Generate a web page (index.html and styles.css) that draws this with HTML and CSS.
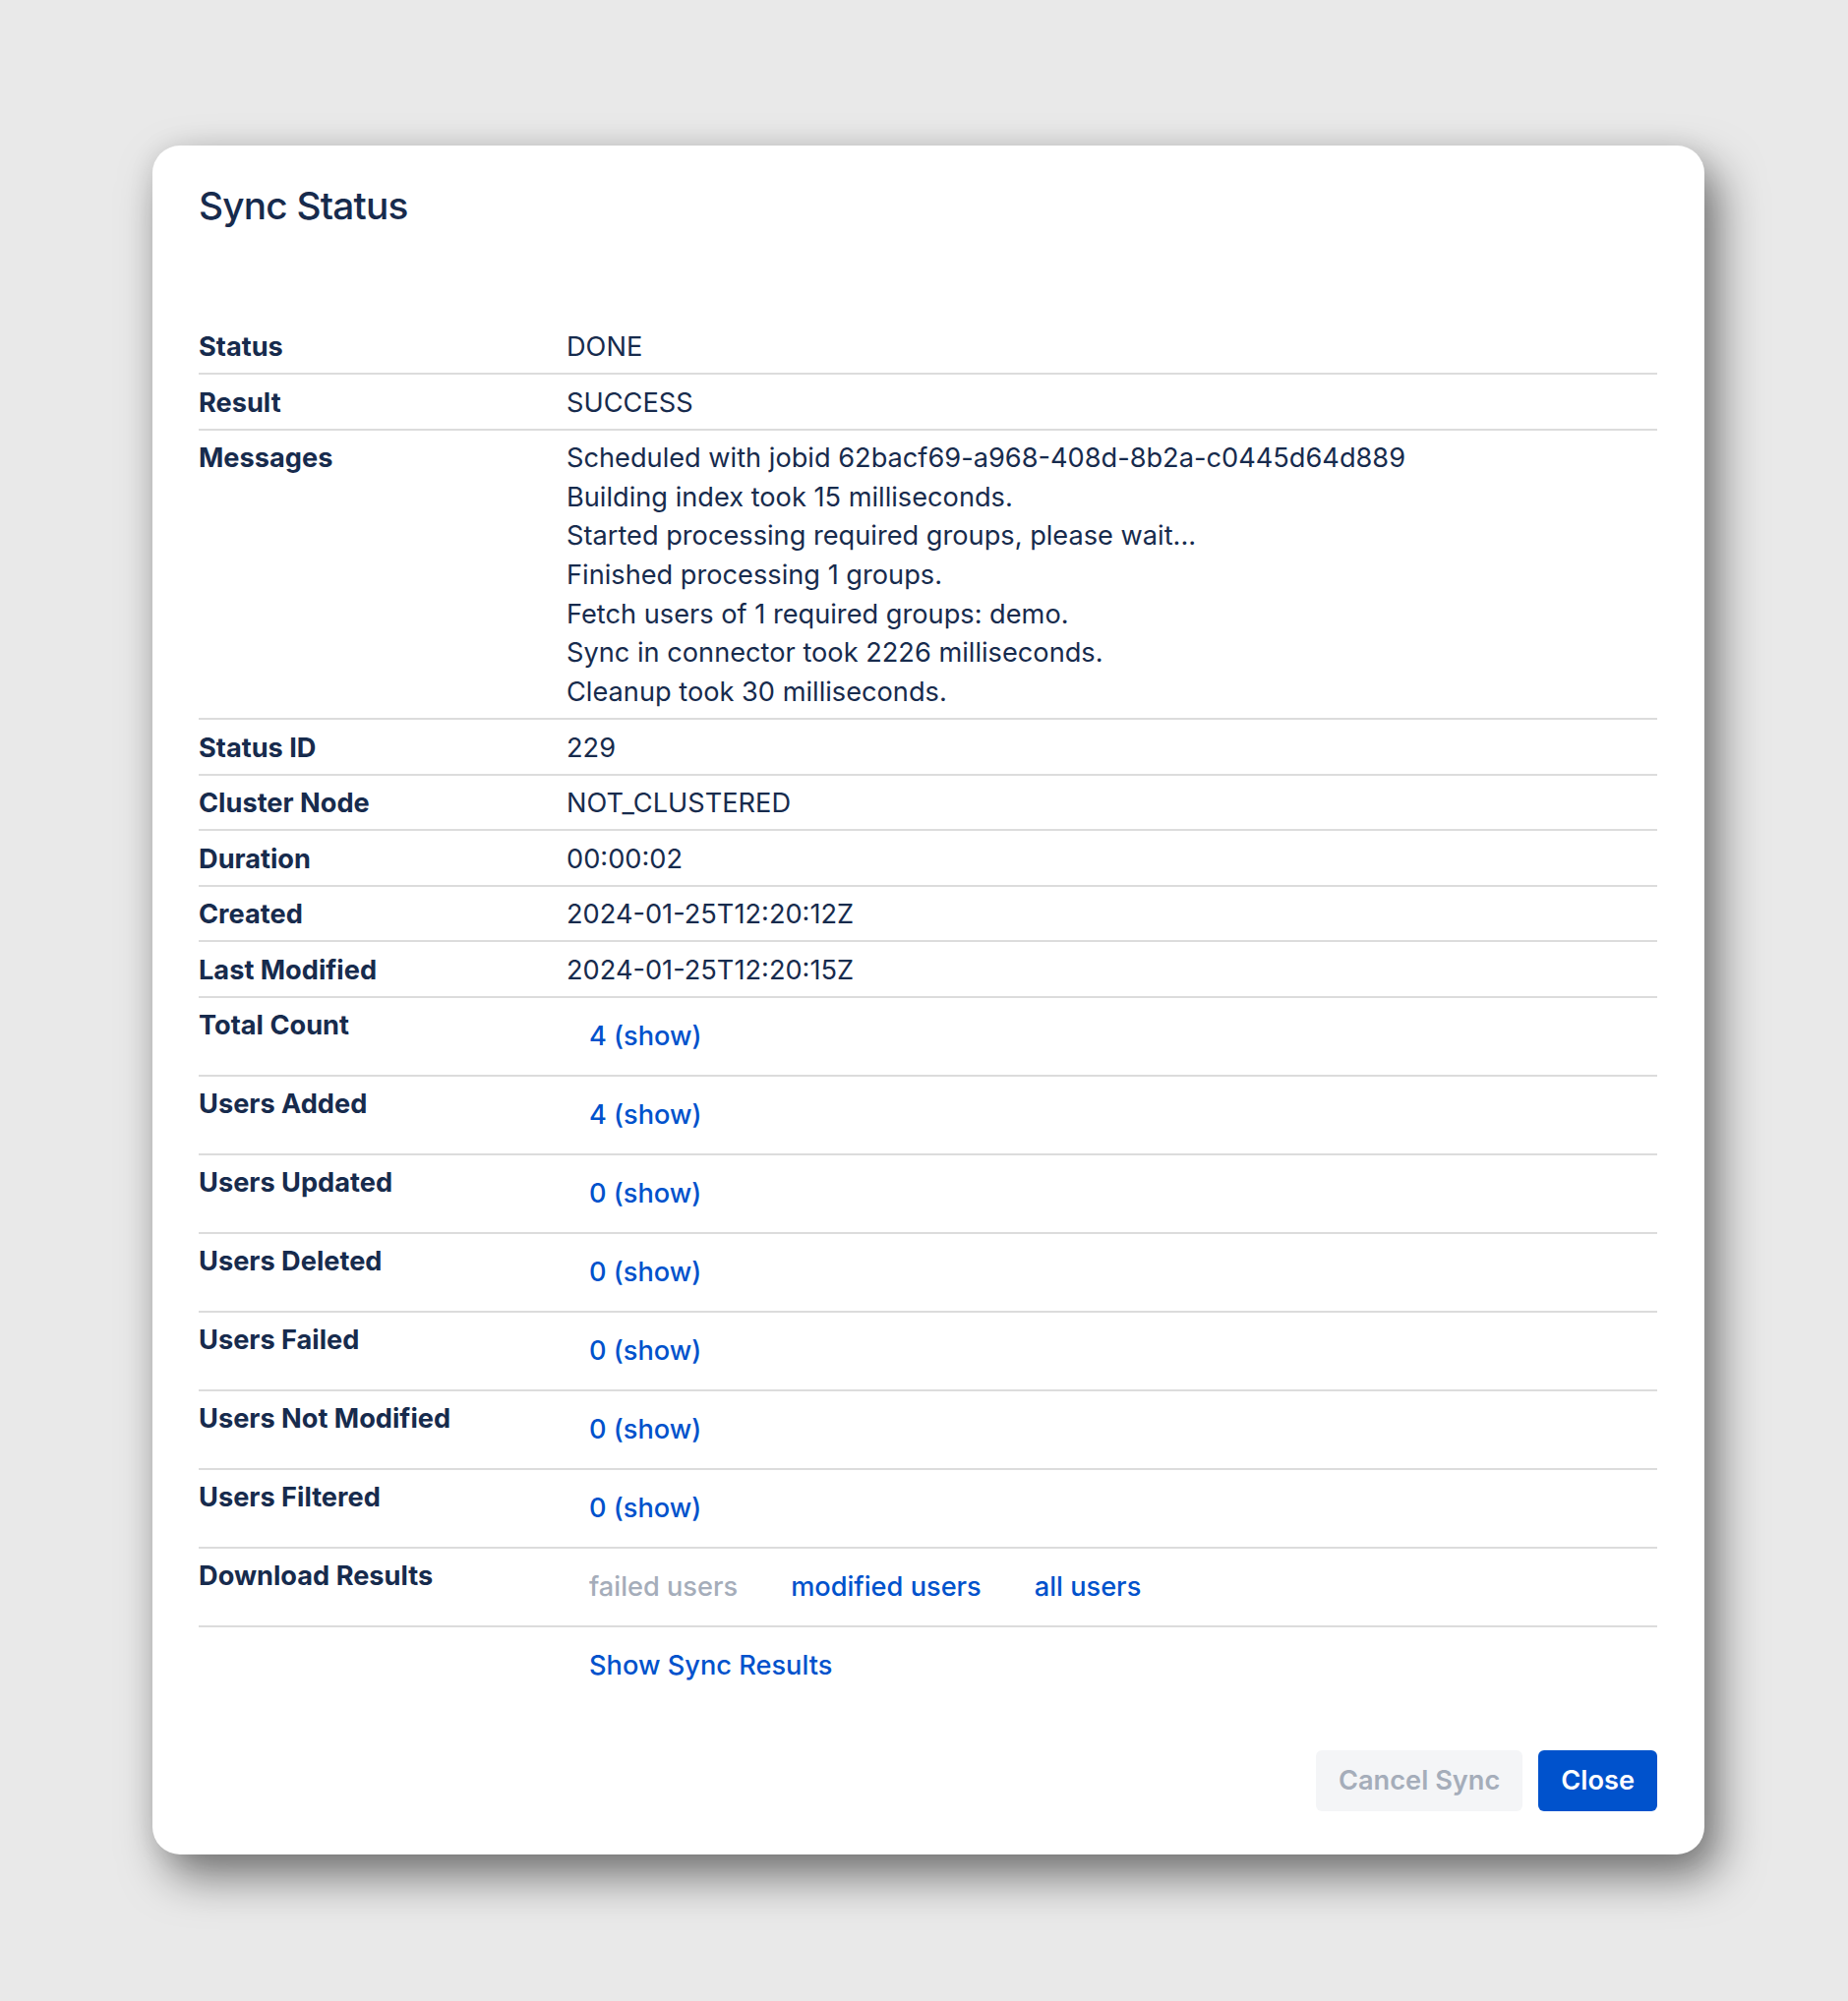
FILE: index.html
```html
<!DOCTYPE html>
<html lang="en">
<head>
<meta charset="utf-8">
<title>Sync Status</title>
<link rel="stylesheet" href="styles.css">
</head>
<body>
<div class="page">
  <section class="dialog">
    <h1 class="dialog-title">Sync Status</h1>
    <table class="status-table">
      <tbody>
        <tr><th>Status</th><td>DONE</td></tr>
        <tr><th>Result</th><td>SUCCESS</td></tr>
        <tr>
          <th>Messages</th>
          <td class="messages">
            <div>Scheduled with jobid 62bacf69-a968-408d-8b2a-c0445d64d889</div>
            <div>Building index took 15 milliseconds.</div>
            <div>Started processing required groups, please wait...</div>
            <div>Finished processing 1 groups.</div>
            <div>Fetch users of 1 required groups: demo.</div>
            <div>Sync in connector took 2226 milliseconds.</div>
            <div>Cleanup took 30 milliseconds.</div>
          </td>
        </tr>
        <tr><th>Status ID</th><td>229</td></tr>
        <tr><th>Cluster Node</th><td>NOT_CLUSTERED</td></tr>
        <tr><th>Duration</th><td>00:00:02</td></tr>
        <tr><th>Created</th><td>2024-01-25T12:20:12Z</td></tr>
        <tr><th>Last Modified</th><td>2024-01-25T12:20:15Z</td></tr>
        <tr class="link-row"><th>Total Count</th><td><a class="link-btn" href="#">4 (show)</a></td></tr>
        <tr class="link-row"><th>Users Added</th><td><a class="link-btn" href="#">4 (show)</a></td></tr>
        <tr class="link-row"><th>Users Updated</th><td><a class="link-btn" href="#">0 (show)</a></td></tr>
        <tr class="link-row"><th>Users Deleted</th><td><a class="link-btn" href="#">0 (show)</a></td></tr>
        <tr class="link-row"><th>Users Failed</th><td><a class="link-btn" href="#">0 (show)</a></td></tr>
        <tr class="link-row"><th>Users Not Modified</th><td><a class="link-btn" href="#">0 (show)</a></td></tr>
        <tr class="link-row"><th>Users Filtered</th><td><a class="link-btn" href="#">0 (show)</a></td></tr>
        <tr class="link-row">
          <th>Download Results</th>
          <td>
            <div class="link-group">
              <span class="link-btn is-disabled">failed users</span>
              <a class="link-btn" href="#">modified users</a>
              <a class="link-btn" href="#">all users</a>
            </div>
          </td>
        </tr>
        <tr class="link-row last-row"><th></th><td><a class="link-btn" href="#">Show Sync Results</a></td></tr>
      </tbody>
    </table>
    <footer class="dialog-footer">
      <button class="btn btn-subtle" type="button" disabled>Cancel Sync</button>
      <button class="btn btn-primary" type="button">Close</button>
    </footer>
  </section>
</div>
</body>
</html>
```
FILE: styles.css
```css
html, body {
  margin: 0;
  padding: 0;
  background: #e9e9e9;
}

body {
  font-family: Inter, "Noto Sans", "Liberation Sans", sans-serif;
  color: #172b4d;
  font-size: 27.2px;
  line-height: 39px;
}

.page {
  min-height: 2035px;
  padding-top: 148px;
  box-sizing: border-box;
}

.dialog {
  margin-left: 155px;
  width: 1578px;
  box-sizing: border-box;
  background: #ffffff;
  border-radius: 28px;
  padding: 38px 48px 44px 47px;
  box-shadow: 0 0 28px rgba(0, 0, 0, 0.07), 14px 22px 46px rgba(0, 0, 0, 0.5);
}

.dialog-title {
  margin: 0 0 92px 0;
  font-size: 38.8px;
  line-height: 46.5px;
  font-weight: 500;
  letter-spacing: -0.8px;
  color: #172b4d;
}

.status-table {
  width: 100%;
  border-collapse: collapse;
  border-spacing: 0;
}

.status-table th,
.status-table td {
  padding: 8.75px 0 6.75px;
  vertical-align: top;
  text-align: left;
  border-bottom: 2px solid #dcdcdc;
}

.status-table th {
  width: 374px;
  font-weight: 700;
}

.status-table td {
  font-weight: 400;
}

.status-table td.messages {
  line-height: 39.6px;
}

.status-table .last-row th,
.status-table .last-row td {
  border-bottom: none;
}

.link-group {
  display: flex;
  gap: 8px;
}

.link-btn {
  display: inline-block;
  height: 62.5px;
  line-height: 62.5px;
  padding: 0 23px;
  color: #0052cc;
  font-weight: 500;
  text-decoration: none;
  border-radius: 6px;
}

.link-btn.is-disabled {
  color: #a5adba;
}

.dialog-footer {
  display: flex;
  justify-content: flex-end;
  gap: 16px;
  margin-top: 47.5px;
}

.btn {
  height: 62px;
  padding: 0 23px;
  border: none;
  border-radius: 6px;
  font-family: inherit;
  font-size: 27.2px;
  font-weight: 600;
  line-height: 62px;
}

.btn-subtle {
  background: #f4f5f7;
  color: #a5adba;
}

.btn-primary {
  background: #0052cc;
  color: #ffffff;
}
```
